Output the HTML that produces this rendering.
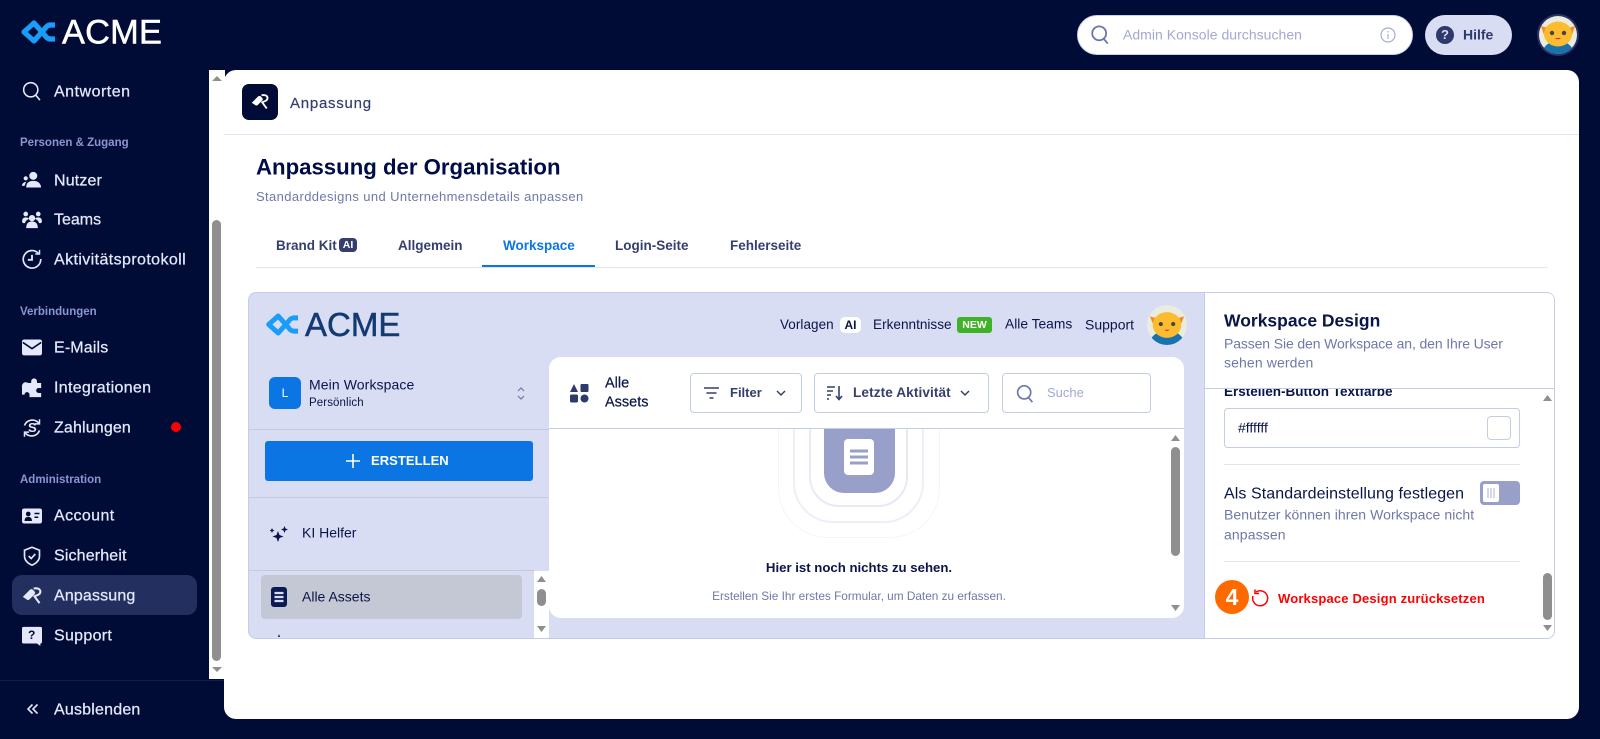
<!DOCTYPE html>
<html lang="de"><head><meta charset="utf-8"><title>Anpassung</title>
<style>
*{box-sizing:border-box}
html,body{margin:0;padding:0;width:1600px;height:739px;overflow:hidden;background:#000c36;font-family:"Liberation Sans",sans-serif}
.a{position:absolute}
.t{position:absolute;white-space:nowrap;transform:translateY(calc(-50% + 1px));line-height:1.2}
.n{left:54px;color:#e4e8fa;font-size:16px;font-weight:500;-webkit-text-stroke:.25px #e4e8fa;letter-spacing:.15px}
.s{left:20px;color:#8a96d0;font-size:11.5px;font-weight:700}
.i{position:absolute;left:22px;width:20px;height:20px;overflow:visible}
.box{position:absolute;background:#fff;border:1px solid #c3cdea;border-radius:4px}
.tab{font-size:13.5px;font-weight:700;color:#343f6d;top:245px}
.d{color:#0a1548}.g{color:#6f79a8}
.sep{position:absolute;height:1px}
</style></head><body>

<!-- top logo -->
<svg class="a" style="left:19px;top:18px" width="37" height="28" viewBox="0 0 37 28"><path d="M36 21H31Q28 20.500 26 17.500L15 5 5 14 15 23 26 10.500Q28 7.500 31 7H36" fill="none" stroke="#1a9cfa" stroke-width="5.200" stroke-linejoin="round"/></svg>
<div class="t" style="left:62px;top:32px;color:#fff;font-size:34.400px;-webkit-text-stroke:.5px #fff;letter-spacing:.2px">ACME</div>

<!-- search -->
<div class="a" style="left:1077px;top:15px;width:336px;height:40px;background:#fff;border-radius:20px;border:1px solid #c9d1ee"></div>
<svg class="a" style="left:1091px;top:25px" width="18" height="20" viewBox="0 0 22 24" fill="none" stroke="#6b76ab" stroke-width="2.200"><circle cx="10" cy="10" r="8.500"/><path d="M15.500 16.500l5 6"/></svg>
<div class="t" style="left:1123px;top:34px;font-size:14px;color:#a0a9d2;letter-spacing:.03px">Admin Konsole durchsuchen</div>
<svg class="a" style="left:1380px;top:27px" width="16" height="16" viewBox="0 0 16 16" fill="none" stroke="#a5aed6" stroke-width="1.200"><circle cx="8" cy="8" r="7"/><path d="M8 7v5M8 4v1.500"/></svg>
<!-- hilfe -->
<div class="a" style="left:1425px;top:15px;width:87px;height:40px;background:#d8ddf3;border-radius:20px"></div>
<div class="a" style="left:1436px;top:26px;width:18px;height:18px;border-radius:50%;background:#2e3a6b;color:#d8ddf3;font-size:13px;font-weight:700;text-align:center;line-height:18px">?</div>
<div class="t" style="left:1463px;top:34px;font-size:14px;font-weight:700;color:#2e3a6b">Hilfe</div>
<!-- avatar top -->
<svg class="a" style="left:1537px;top:14px" width="42" height="42" viewBox="0 0 42 42"><defs><clipPath id="c1"><circle cx="21" cy="21" r="19"/></clipPath></defs><circle cx="21" cy="21" r="21" fill="#2c3165"/><circle cx="21" cy="21" r="19" fill="#e9ecdf"/><g clip-path="url(#c1)"><ellipse cx="21" cy="38" rx="15" ry="11" fill="#1673ad"/><path d="M4 12l10 3-6 9zM38 12l-10 3 6 9z" fill="#f78b1f"/><ellipse cx="21" cy="20" rx="14" ry="12.500" fill="#fdbb30"/><circle cx="15" cy="19" r="2.200" fill="#444"/><circle cx="27" cy="19" r="2.200" fill="#444"/><path d="M18 24q3 2.500 6 0z" fill="#c8302c"/></g></svg>

<!-- sidebar -->
<svg class="i" style="top:81px" viewBox="0 0 24 24" fill="none" stroke="#e4e8fa" stroke-width="1.900"><circle cx="10.500" cy="10.500" r="8.500"/><path d="M16.500 17l5 6"/></svg>
<div class="t n" style="top:91px;letter-spacing:.5px">Antworten</div>
<div class="t s" style="top:143px">Personen &amp; Zugang</div>
<svg class="i" style="top:170px" viewBox="0 0 24 24" fill="#e4e8fa"><circle cx="13.500" cy="7" r="4.800"/><path d="M5 21q0-8 8.500-8T23 21z"/><circle cx="4.500" cy="10" r="2.500"/><path d="M0 19q0-4 5-5l-2 5z"/></svg>
<div class="t n" style="top:179.500px">Nutzer</div>
<svg class="i" style="top:209px" viewBox="0 0 24 24" fill="#e4e8fa"><circle cx="12" cy="11" r="3.800"/><circle cx="4.500" cy="6" r="2.800"/><circle cx="19.500" cy="6" r="2.800"/><path d="M5 23q0-8 7-8t7 8z"/><path d="M0 15q0-5 4.500-5 3 0 4 2-4 1-5 5H1zM24 15q0-5-4.500-5-3 0-4 2 4 1 5 5h2.500z"/></svg>
<div class="t n" style="top:219px;letter-spacing:0">Teams</div>
<svg class="i" style="top:249px" viewBox="0 0 24 24" fill="none" stroke="#e4e8fa" stroke-width="2"><path d="M19.500 5A10.500 10.500 0 1 0 22.500 12"/><path d="M16 6h5V1" stroke-width="1.800"/><path d="M12 7v6H7" stroke-width="2.200"/></svg>
<div class="t n" style="top:259px;letter-spacing:.4px">Aktivitätsprotokoll</div>

<div class="t s" style="top:312px">Verbindungen</div>
<svg class="i" style="top:337px" viewBox="0 0 24 24"><rect x="0" y="3" width="24" height="19" rx="2.500" fill="#e4e8fa"/><path d="M1 6.500l11 7.500 11-7.500" fill="none" stroke="#000c36" stroke-width="2"/></svg>
<div class="t n" style="top:347px">E-Mails</div>
<svg class="i" style="top:378px" viewBox="0 0 24 24" fill="#e4e8fa"><path d="M8 6h3V4a3.500 3.500 0 0 1 7 0v2h5v6h-3a3 3 0 0 0 0 6h3v5H9v-3a3 3 0 0 0-6 0H0v-9a5 5 0 0 1 4-6z"/></svg>
<div class="t n" style="top:387px;letter-spacing:.3px">Integrationen</div>
<svg class="i" style="top:418px" viewBox="0 0 24 24" fill="none" stroke="#e4e8fa" stroke-width="2"><path d="M3 9A10 10 0 0 1 20 6M21 15A10 10 0 0 1 4 18"/><path d="M21 1.500v5.500h-5.500M3 22.500v-5.500h5.500" stroke-width="1.800"/></svg>
<div class="t" style="left:28px;top:427px;color:#e4e8fa;font-size:13px;font-weight:700">S</div>
<div class="t n" style="top:427px">Zahlungen</div>
<div class="a" style="left:171px;top:422px;width:10px;height:10px;border-radius:50%;background:#f00"></div>

<div class="t s" style="top:480px">Administration</div>
<svg class="i" style="top:506px" viewBox="0 0 24 24"><rect x="0" y="3" width="24" height="18" rx="2.500" fill="#e4e8fa"/><circle cx="7.500" cy="9.500" r="2.800" fill="#000c36"/><path d="M3 18q0-5 4.500-5t4.500 5z" fill="#000c36"/><path d="M15 9h6M15 13.500h4.500" stroke="#000c36" stroke-width="1.800"/></svg>
<div class="t n" style="top:515px;letter-spacing:.4px">Account</div>
<svg class="i" style="top:546px" viewBox="0 0 24 24" fill="none" stroke="#e4e8fa" stroke-width="2"><path d="M12 1.500l9 3.500v7q0 7-9 11-9-4-9-11V5z"/><path d="M8 12l3 3 5-5.500"/></svg>
<div class="t n" style="top:555px">Sicherheit</div>
<div class="a" style="left:12px;top:575px;width:185px;height:40px;border-radius:10px;background:#232f5e"></div>
<svg class="i" style="top:586px" viewBox="0 0 24 24"><path d="M1 13l8.500-8.500q2-1.500 3.500 0l2 2q1.500 2 0 3.500l-6 6q-2 1.500-3.500 0z" fill="#e4e8fa"/><path d="M14 3q7-1 8 3 .5 4-5 5.500l-2 1 6 8" fill="none" stroke="#e4e8fa" stroke-width="2.500"/></svg>
<div class="t n" style="top:595px">Anpassung</div>
<svg class="i" style="top:626px" viewBox="0 0 24 24"><path d="M2 1h20a2 2 0 0 1 2 2v16a2 2 0 0 1-2 2v3l-4-3H2a2 2 0 0 1-2-2V3a2 2 0 0 1 2-2z" fill="#e4e8fa"/></svg>
<div class="t" style="left:28px;top:634px;color:#000c36;font-size:12px;font-weight:700">?</div>
<div class="t n" style="top:635px;letter-spacing:.3px">Support</div>
<div class="sep" style="left:0;top:680px;width:224px;background:#0e1f55"></div>
<svg class="a" style="left:27px;top:703px" width="11" height="12" viewBox="0 0 11 12" fill="none" stroke="#e4e8fa" stroke-width="1.600"><path d="M5.500 1.500L1 6l4.500 4.500M10.500 1.500L6 6l4.500 4.500"/></svg>
<div class="t n" style="top:709px;letter-spacing:.2px">Ausblenden</div>

<!-- sidebar scrollbar -->
<div class="a" style="left:209px;top:70px;width:16px;height:609px;background:#fff"></div>
<div class="a" style="left:212px;top:220px;width:9px;height:441px;border-radius:5px;background:#8f8f8f"></div>
<svg class="a" style="left:212px;top:75px" width="10" height="7"><path d="M5 1L10 6H0z" fill="#8f8f8f"/></svg>
<svg class="a" style="left:212px;top:666px" width="10" height="7"><path d="M0 1H10L5 6z" fill="#8f8f8f"/></svg>

<!-- main panel -->
<div class="a" style="left:224px;top:70px;width:1355px;height:649px;background:#fff;border-radius:12px"></div>
<div class="a" style="left:242px;top:84px;width:36px;height:36px;border-radius:7px;background:#000c36"></div>
<svg class="a" style="left:251px;top:93px" width="18" height="18" viewBox="0 0 24 24"><path d="M1 13l8.500-8.500q2-1.500 3.500 0l2 2q1.500 2 0 3.500l-6 6q-2 1.500-3.500 0z" fill="#fff"/><path d="M14 3q7-1 8 3 .5 4-5 5.500l-2 1 6 8" fill="none" stroke="#fff" stroke-width="2.500"/></svg>
<div class="t" style="left:290px;top:102.500px;font-size:15px;font-weight:500;color:#343f6d;-webkit-text-stroke:.2px #343f6d;letter-spacing:.75px">Anpassung</div>
<div class="sep" style="left:224px;top:134px;width:1355px;background:#e1e6f5"></div>
<div class="t" style="left:256px;top:166.500px;font-size:22.200px;font-weight:700;color:#000c46">Anpassung der Organisation</div>
<div class="t g" style="left:256px;top:196px;font-size:13px;letter-spacing:.38px">Standarddesigns und Unternehmensdetails anpassen</div>

<div class="t tab" style="left:276px">Brand Kit</div>
<div class="a" style="left:339px;top:238px;width:18px;height:14px;border-radius:4px;background:#343f6d;color:#fff;font-size:10.500px;font-weight:700;line-height:14px;text-align:center">AI</div>
<div class="t tab" style="left:398px">Allgemein</div>
<div class="t tab" style="left:503px;color:#0b75e4">Workspace</div>
<div class="t tab" style="left:615px">Login-Seite</div>
<div class="t tab" style="left:730px">Fehlerseite</div>
<div class="sep" style="left:256px;top:267px;width:1292px;background:#e1e6f5"></div>
<div class="a" style="left:482px;top:265px;width:113px;height:2px;background:#0b75e4"></div>

<!-- preview -->
<div class="a" style="left:248px;top:292px;width:1307px;height:347px;border:1px solid #c3cdea;border-radius:8px;background:#d8ddf3;overflow:hidden"></div>
<svg class="a" style="left:264px;top:311px" width="35" height="27" viewBox="0 0 37 28"><path d="M36 21H31Q28 20.500 26 17.500L15 5 5 14 15 23 26 10.500Q28 7.500 31 7H36" fill="none" stroke="#1a9cfa" stroke-width="5.200" stroke-linejoin="round"/></svg>
<div class="t" style="left:305px;top:324px;color:#143a73;font-size:33px;-webkit-text-stroke:.5px #143a73">ACME</div>

<div class="t d" style="left:780px;top:324px;font-size:13.500px;letter-spacing:.05px">Vorlagen</div>
<div class="a" style="left:840px;top:317px;width:21px;height:16px;border-radius:5px;background:#fff;color:#0a1548;font-size:12px;font-weight:700;text-align:center;line-height:16px">AI</div>
<div class="t d" style="left:873px;top:324px;font-size:13.600px">Erkenntnisse</div>
<div class="a" style="left:957px;top:317px;width:35px;height:16px;border-radius:3px;background:#3fb228;color:#fff;font-size:10.500px;font-weight:700;text-align:center;line-height:16px">NEW</div>
<div class="t d" style="left:1005px;top:324px;font-size:13.800px">Alle Teams</div>
<div class="t d" style="left:1085px;top:324px;font-size:14px">Support</div>
<svg class="a" style="left:1147px;top:305px" width="40" height="40" viewBox="0 0 42 42"><defs><clipPath id="c2"><circle cx="21" cy="21" r="21"/></clipPath></defs><circle cx="21" cy="21" r="21" fill="#e9ecdf"/><g clip-path="url(#c2)"><ellipse cx="21" cy="40" rx="18" ry="13" fill="#1673ad"/><path d="M3 12l11 3-6 9zM39 12l-11 3 6 9z" fill="#f78b1f"/><ellipse cx="21" cy="21" rx="15" ry="13.500" fill="#fdbb30"/><circle cx="14.500" cy="20" r="2.200" fill="#444"/><circle cx="27.500" cy="20" r="2.200" fill="#444"/><path d="M18 26q3 2.500 6 0z" fill="#c8302c"/></g></svg>

<div class="a" style="left:269px;top:377px;width:32px;height:32px;border-radius:6px;background:#0b75e4;color:#fff;font-size:12px;text-align:center;line-height:32px">L</div>
<div class="t d" style="left:309px;top:383.500px;font-size:14px;letter-spacing:.1px">Mein Workspace</div>
<div class="t d" style="left:309px;top:403px;font-size:11.500px;letter-spacing:.1px">Persönlich</div>
<svg class="a" style="left:516px;top:386px" width="10" height="15" fill="none" stroke="#6b76ab" stroke-width="1.200"><path d="M2 5l3-3 3 3M2 10l3 3 3-3"/></svg>
<div class="sep" style="left:249px;top:429px;width:300px;background:#c6c9d6"></div>
<div class="a" style="left:265px;top:441px;width:268px;height:40px;border-radius:3px;background:#0b75e4"></div>
<svg class="a" style="left:346px;top:454px" width="14" height="14" stroke="#fff" stroke-width="1.600"><path d="M7 0v14M0 7h14"/></svg>
<div class="t" style="left:371px;top:460px;color:#fff;font-size:13px;font-weight:700;letter-spacing:.05px">ERSTELLEN</div>
<div class="sep" style="left:249px;top:497px;width:300px;background:#c6c9d6"></div>
<svg class="a" style="left:270px;top:526px" width="18" height="16" viewBox="0 0 18 16" fill="#0a1548"><path d="M8 5l1.500 4 4 1.500-4 1.500L8 16l-1.500-4-4-1.500 4-1.500z"/><path d="M14.500 0l1 2.500 2.500 1-2.500 1-1 2.500-1-2.500-2.500-1 2.500-1zM2 2l.8 1.700L4.500 4.500 2.800 5.300 2 7l-.8-1.700L-.5 4.500 1.200 3.700z"/></svg>
<div class="t d" style="left:302px;top:532px;font-size:14px">KI Helfer</div>
<div class="sep" style="left:249px;top:570px;width:285px;background:#c6c9d6"></div>
<div class="a" style="left:261px;top:575px;width:261px;height:44px;border-radius:4px;background:#c4c8d4"></div>
<svg class="a" style="left:271px;top:587px" width="16" height="20" viewBox="0 0 16 20"><rect width="16" height="20" rx="3" fill="#0b1a55"/><path d="M3.500 6h9M3.500 10h9M3.500 14h9" stroke="#d8ddf3" stroke-width="2.200"/></svg>
<div class="t d" style="left:302px;top:596px;font-size:14px">Alle Assets</div>
<svg class="a" style="left:271px;top:632px" width="16" height="7"><path d="M8 2l1 3H7z" fill="#0a1548"/></svg>
<div class="a" style="left:534px;top:571px;width:15px;height:67px;background:#fff"></div>
<div class="a" style="left:537px;top:589px;width:9px;height:17px;border-radius:5px;background:#8f8f8f"></div>
<svg class="a" style="left:537px;top:576px" width="9" height="6"><path d="M4.500 0L9 6H0z" fill="#8f8f8f"/></svg>
<svg class="a" style="left:537px;top:626px" width="9" height="6"><path d="M0 0H9L4.500 6z" fill="#8f8f8f"/></svg>

<!-- main card -->
<div class="a" style="left:549px;top:357px;width:635px;height:261px;background:#fff;border-radius:12px;overflow:hidden">
  <div class="a" style="left:229px;top:-60px;width:162px;height:241px;border:1px solid #f4f5fc;border-radius:50px"></div>
  <div class="a" style="left:244px;top:-60px;width:131px;height:226px;border:2px solid #eceefa;border-radius:40px"></div>
  <div class="a" style="left:260px;top:-60px;width:99px;height:210px;border:2px solid #e6e9f8;border-radius:30px"></div>
  <div class="a" style="left:275px;top:-30px;width:71px;height:166px;border-radius:20px;background:#989fc8"></div>
  <div class="a" style="left:295px;top:82px;width:30px;height:36px;border-radius:4px;background:#fff"></div>
  <svg class="a" style="left:301px;top:92px" width="18" height="16" stroke="#989fc8" stroke-width="3"><path d="M0 2h18M0 8h18M0 14h18"/></svg>
  <div class="a" style="left:0;top:0;width:635px;height:72px;background:#fff;border-bottom:1px solid #c3cdea"></div>
</div>
<svg class="a" style="left:570px;top:384px" width="19" height="19" viewBox="0 0 19 19" fill="#2e3a6b"><path d="M4 0l4 8H0z"/><rect x="10.500" y="0" width="8" height="8" rx="1"/><rect x="0" y="10.500" width="8" height="8" rx="1.500"/><circle cx="14.500" cy="14.500" r="4"/></svg>
<div class="t d" style="left:605px;top:383px;font-size:14.500px;font-weight:500;-webkit-text-stroke:.2px #0a1548">Alle</div>
<div class="t d" style="left:605px;top:402px;font-size:14.500px;font-weight:500;-webkit-text-stroke:.2px #0a1548">Assets</div>

<div class="box" style="left:690px;top:373px;width:112px;height:40px"></div>
<svg class="a" style="left:704px;top:386px" width="15" height="14" stroke="#343f6d" stroke-width="1.500"><path d="M0 2h15M2.500 7h10M5.500 12h4"/></svg>
<div class="t" style="left:730px;top:392px;font-size:13px;font-weight:700;color:#343f6d">Filter</div>
<svg class="a" style="left:776px;top:390px" width="10" height="7" fill="none" stroke="#343f6d" stroke-width="1.500"><path d="M1 1l4 4 4-4"/></svg>
<div class="box" style="left:814px;top:373px;width:175px;height:40px"></div>
<svg class="a" style="left:827px;top:385px" width="16" height="16" stroke="#343f6d" stroke-width="1.600" fill="none"><path d="M0 2h8M0 6h6M0 10h4M0 14h2M12 1v13M9 11l3 3.500 3-3.500"/></svg>
<div class="t" style="left:853px;top:392px;font-size:13.600px;font-weight:700;color:#343f6d;letter-spacing:.1px">Letzte Aktivität</div>
<svg class="a" style="left:960px;top:390px" width="10" height="7" fill="none" stroke="#343f6d" stroke-width="1.500"><path d="M1 1l4 4 4-4"/></svg>
<div class="box" style="left:1002px;top:373px;width:149px;height:40px"></div>
<svg class="a" style="left:1016px;top:384px" width="18" height="20" viewBox="0 0 22 24" fill="none" stroke="#6b76ab" stroke-width="2"><circle cx="10" cy="10" r="8"/><path d="M15 16l5 6"/></svg>
<div class="t" style="left:1047px;top:392px;font-size:13px;color:#a0a9d2">Suche</div>

<div class="a" style="left:659px;top:557.500px;width:400px;text-align:center;font-size:13.200px;font-weight:700;color:#0a1548;line-height:20px">Hier ist noch nichts zu sehen.</div>
<div class="a" style="left:659px;top:587px;width:400px;text-align:center;font-size:11.800px;color:#6f79a8;line-height:18px">Erstellen Sie Ihr erstes Formular, um Daten zu erfassen.</div>

<div class="a" style="left:1171px;top:447px;width:9px;height:109px;border-radius:5px;background:#8f8f8f"></div>
<svg class="a" style="left:1171px;top:435px" width="9" height="6"><path d="M4.500 0L9 6H0z" fill="#8f8f8f"/></svg>
<svg class="a" style="left:1171px;top:605px" width="9" height="6"><path d="M0 0H9L4.500 6z" fill="#8f8f8f"/></svg>

<!-- right panel -->
<div class="a" style="left:1204px;top:293px;width:350px;height:345px;background:#fff;border-left:1px solid #c3cdea;border-radius:0 7px 7px 0;overflow:hidden">
  <div class="t" style="left:19px;top:98px;font-size:13.500px;font-weight:700;color:#0a1548">Erstellen-Button Textfarbe</div>
  <div class="a" style="left:0;top:0;width:350px;height:96px;background:#fff;border-bottom:1px solid #c3cdea"></div>
</div>
<div class="t" style="left:1224px;top:320px;font-size:17.500px;font-weight:700;color:#0a1548">Workspace Design</div>
<div class="t g" style="left:1224px;top:343px;font-size:14px;letter-spacing:-.12px">Passen Sie den Workspace an, den Ihre User</div>
<div class="t g" style="left:1224px;top:362px;font-size:14px;letter-spacing:.12px">sehen werden</div>
<div class="box" style="left:1224px;top:408px;width:296px;height:40px"></div>
<div class="t" style="left:1238px;top:427px;font-size:14px;color:#0a1548">#ffffff</div>
<div class="a" style="left:1487px;top:416px;width:24px;height:24px;border:1px solid #c8ccd8;border-radius:4px;background:#fff"></div>
<div class="sep" style="left:1224px;top:464px;width:296px;background:#e1e4ef"></div>
<div class="t d" style="left:1224px;top:492.500px;font-size:16px;letter-spacing:.08px">Als Standardeinstellung festlegen</div>
<div class="a" style="left:1480px;top:481px;width:40px;height:24px;border-radius:4px;background:#989fc8"></div>
<div class="a" style="left:1483px;top:484px;width:16px;height:18px;border-radius:2px;background:#fff"></div>
<svg class="a" style="left:1487px;top:488px" width="8" height="10" stroke="#989fc8" stroke-width=".8"><path d="M1 0v10M4 0v10M7 0v10"/></svg>
<div class="t g" style="left:1224px;top:514px;font-size:14px;letter-spacing:.06px">Benutzer können ihren Workspace nicht</div>
<div class="t g" style="left:1224px;top:534px;font-size:14px;letter-spacing:.12px">anpassen</div>
<div class="sep" style="left:1224px;top:561px;width:296px;background:#e1e4ef"></div>
<div class="a" style="left:1215px;top:580px;width:34px;height:34px;border-radius:50%;background:#ff6a00;color:#fff;font-size:23px;font-weight:700;text-align:center;line-height:34px">4</div>
<svg class="a" style="left:1251px;top:589px" width="18" height="18" viewBox="0 0 18 18" fill="none" stroke="#f00" stroke-width="1.500"><path d="M5 3a7.500 7.500 0 1 1-3 4"/><path d="M4 0.500v4h4"/></svg>
<div class="t" style="left:1278px;top:598px;font-size:13px;font-weight:700;color:#f00;letter-spacing:.17px">Workspace Design zurücksetzen</div>
<div class="a" style="left:1543px;top:573px;width:9px;height:47px;border-radius:5px;background:#8f8f8f"></div>
<svg class="a" style="left:1543px;top:395px" width="9" height="6"><path d="M4.500 0L9 6H0z" fill="#8f8f8f"/></svg>
<svg class="a" style="left:1543px;top:625px" width="9" height="6"><path d="M0 0H9L4.500 6z" fill="#8f8f8f"/></svg>

</body></html>
